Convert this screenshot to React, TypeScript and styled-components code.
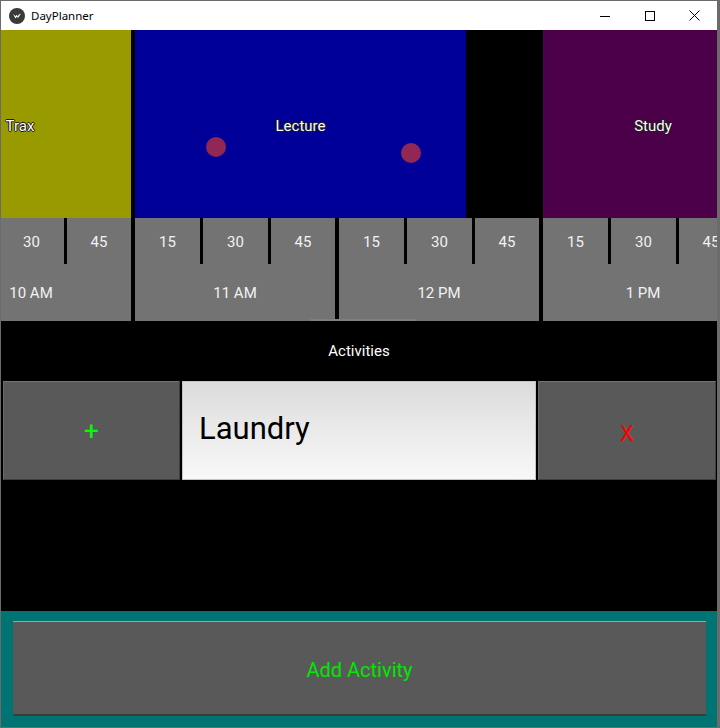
import React from "react";
import styled, { createGlobalStyle } from "styled-components";

const GlobalStyle = createGlobalStyle`
  html, body { margin: 0; padding: 0; background: #ffffff; }
  * { box-sizing: border-box; }
  body { font-family: Roboto, "Liberation Sans", sans-serif; }
`;

const Window = styled.div`
  width: 720px;
  height: 728px;
  border-left: 1px solid #6b6b6b;
  border-top: 1px solid #6b6b6b;
  border-right: 3px solid #6b6b6b;
  border-bottom: 1px solid #6b6b6b;
  display: flex;
  flex-direction: column;
  overflow: hidden;
`;

const TitleBar = styled.div`
  height: 29px;
  flex: 0 0 29px;
  background: #ffffff;
  display: flex;
  align-items: center;
  padding-left: 8px;
`;

const AppIcon = styled.svg`
  width: 16px;
  height: 16px;
  flex: 0 0 16px;
`;

const Title = styled.span`
  margin-left: 6px;
  font-family: "Noto Sans", "Open Sans", sans-serif;
  font-size: 11.5px;
  color: #000;
  flex: 1;
`;

const Controls = styled.div`
  display: flex;
  height: 100%;
`;

const ControlButton = styled.div`
  width: 45px;
  height: 100%;
  display: flex;
  align-items: center;
  justify-content: center;
`;

const Content = styled.div`
  flex: 1;
  background: #000;
  display: flex;
  flex-direction: column;
  min-height: 0;
`;

const EventsTrack = styled.div`
  position: relative;
  height: 188px;
  flex: 0 0 188px;
  display: flex;
  overflow: hidden;
`;

const EventBlock = styled.div<{ $bg: string; $w: number; $ml: number }>`
  flex: 0 0 ${(p) => p.$w}px;
  margin-left: ${(p) => p.$ml}px;
  background: ${(p) => p.$bg};
  display: flex;
  align-items: center;
  justify-content: center;
  color: #fff;
  font-size: 15px;
  padding-top: 3px;
  text-shadow: 0 0 1px #000, 1px 0 0 #222, -1px 0 0 #222, 0 1px 0 #222, 0 -1px 0 #222;
`;

const Dot = styled.div<{ $x: number; $y: number }>`
  position: absolute;
  left: ${(p) => p.$x - 10}px;
  top: ${(p) => p.$y - 10}px;
  width: 20px;
  height: 20px;
  border-radius: 50%;
  background: #912853;
`;

const Timeline = styled.div`
  position: relative;
  height: 103px;
  flex: 0 0 103px;
  display: flex;
  gap: 4px;
  overflow: hidden;
`;

const HourBlock = styled.div<{ $ml?: number }>`
  flex: 0 0 200px;
  margin-left: ${(p) => p.$ml ?? 0}px;
  background: #737373;
  display: flex;
  flex-direction: column;
  color: #f2f2f2;
  font-size: 15px;
`;

const QuarterRow = styled.div`
  height: 47px;
  display: flex;
`;

const Quarter = styled.div<{ $w: number }>`
  flex: 0 0 ${(p) => p.$w}px;
  display: flex;
  align-items: center;
  justify-content: center;
`;

const Tick = styled.div`
  flex: 0 0 3px;
  background: #000;
  height: 46px;
`;

const HourLabel = styled.div`
  flex: 1;
  display: flex;
  align-items: center;
  justify-content: center;
`;

const ScrollHint = styled.div`
  position: absolute;
  left: 309px;
  bottom: 0;
  width: 106px;
  height: 2px;
  background: #7e7e7e;
`;

const Middle = styled.div`
  flex: 1;
  display: flex;
  flex-direction: column;
`;

const SectionTitle = styled.div`
  height: 60px;
  display: flex;
  align-items: center;
  justify-content: center;
  color: #fff;
  font-size: 15px;
`;

const ActivityRow = styled.div`
  height: 99px;
  display: grid;
  grid-template-columns: 177px 1fr 178px;
  gap: 2px;
  padding: 0 1px 0 2px;
`;

const DarkButton = styled.div<{ $color: string; $size: number; $pt: number }>`
  background: #595959;
  border-top: 1px solid #737373;
  border-left: 1px solid #6a6a6a;
  border-right: 1px solid #3f3f3f;
  border-bottom: 1px solid #3f3f3f;
  display: flex;
  align-items: center;
  justify-content: center;
  padding-top: ${(p) => p.$pt}px;
  color: ${(p) => p.$color};
  font-size: ${(p) => p.$size}px;
`;

const TextField = styled.div`
  background: linear-gradient(#dcdcdc, #f8f8f8);
  border: 1px solid #c4c4c4;
  display: flex;
  align-items: center;
  padding-left: 16px;
  padding-bottom: 4px;
  font-size: 31px;
  color: #000;
`;

const Spacer = styled.div`
  flex: 1;
`;

const Footer = styled.div`
  height: 116px;
  flex: 0 0 116px;
  background: #007373;
  padding: 10px 11px 11px 12px;
  display: flex;
`;

const AddButton = styled.div`
  flex: 1;
  background: #595959;
  border-top: 1px solid #9aa6a6;
  border-bottom: 2px solid #3c3c3c;
  display: flex;
  align-items: center;
  justify-content: center;
  color: #00e800;
  font-size: 20px;
  padding-top: 3px;
`;

type Hour = { label: string; ml?: number };
const hours: Hour[] = [
  { label: "10 AM", ml: -70 },
  { label: "11 AM" },
  { label: "12 PM" },
  { label: "1 PM" },
];

export default function App() {
  return (
    <>
      <GlobalStyle />
      <Window>
        <TitleBar>
          <AppIcon viewBox="0 0 16 16">
            <circle cx="8" cy="8" r="8" fill="#3a3a3a" />
            <path d="M4 6 L6.5 10.5 L8 8.5 L9 10 L12 5.5 L10 6.5 L8.6 8.2 L7.6 6.8 L6.6 8.2 Z" fill="#ffffff" />
          </AppIcon>
          <Title>DayPlanner</Title>
          <Controls>
            <ControlButton>
              <svg width="10" height="10" viewBox="0 0 10 10">
                <line x1="0" y1="5.5" x2="10" y2="5.5" stroke="#000" strokeWidth="1" />
              </svg>
            </ControlButton>
            <ControlButton>
              <svg width="10" height="10" viewBox="0 0 10 10">
                <rect x="0.5" y="0.5" width="9" height="9" fill="none" stroke="#000" strokeWidth="1" />
              </svg>
            </ControlButton>
            <ControlButton>
              <svg width="11" height="11" viewBox="0 0 11 11">
                <path d="M0.5 0.5 L10.5 10.5 M10.5 0.5 L0.5 10.5" stroke="#000" strokeWidth="1" />
              </svg>
            </ControlButton>
          </Controls>
        </TitleBar>
        <Content>
          <EventsTrack>
            <EventBlock $bg="#999900" $w={222} $ml={-92}>Trax</EventBlock>
            <EventBlock $bg="#000099" $w={331} $ml={4}>Lecture</EventBlock>
            <EventBlock $bg="#4c004a" $w={220} $ml={77}>Study</EventBlock>
            <Dot $x={215} $y={117} />
            <Dot $x={410} $y={123} />
          </EventsTrack>
          <Timeline>
            {hours.map((h) => (
              <HourBlock key={h.label} $ml={h.ml}>
                <QuarterRow>
                  <Quarter $w={65}>15</Quarter>
                  <Tick />
                  <Quarter $w={65}>30</Quarter>
                  <Tick />
                  <Quarter $w={64}>45</Quarter>
                </QuarterRow>
                <HourLabel>{h.label}</HourLabel>
              </HourBlock>
            ))}
            <ScrollHint />
          </Timeline>
          <Middle>
            <SectionTitle>Activities</SectionTitle>
            <ActivityRow>
              <DarkButton $color="#00ff00" $size={26} $pt={0}>+</DarkButton>
              <TextField>Laundry</TextField>
              <DarkButton $color="#ff0000" $size={22} $pt={5}>X</DarkButton>
            </ActivityRow>
            <Spacer />
          </Middle>
          <Footer>
            <AddButton>Add Activity</AddButton>
          </Footer>
        </Content>
      </Window>
    </>
  );
}
